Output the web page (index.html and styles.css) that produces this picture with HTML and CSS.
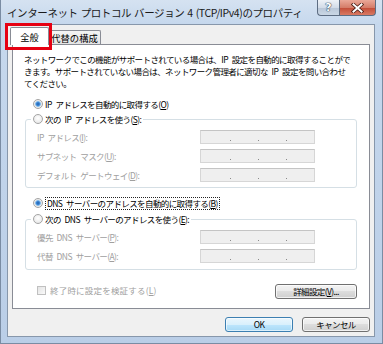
FILE: index.html
```html
<!DOCTYPE html>
<html lang="ja">
<head>
<meta charset="utf-8">
<title>インターネット プロトコル バージョン 4 (TCP/IPv4)のプロパティ</title>
<link rel="stylesheet" href="styles.css">
</head>
<body>
<div class="window">
  <div class="titlebar">
    <div class="title">インターネット プロトコル バージョン 4 (TCP/IPv4)のプロパティ</div>
    <div class="caption-btns">
      <div class="cap-btn help">?</div>
      <div class="cap-btn close">
        <svg width="13" height="10" viewBox="0 0 13 10"><path d="M2.5 1.5 L10.5 8.5 M10.5 1.5 L2.5 8.5" stroke="#4a1d14" stroke-width="3.6" stroke-linecap="square"/><path d="M2.5 1.5 L10.5 8.5 M10.5 1.5 L2.5 8.5" stroke="#ffffff" stroke-width="2" stroke-linecap="square"/></svg>
      </div>
    </div>
  </div>
  <div class="client">
    <div class="tabs">
      <div class="tab active">全般</div>
      <div class="tab second">代替の構成</div>
    </div>
    <div class="panel">
      <p class="desc">ネットワークでこの機能がサポートされている場合は、IP 設定を自動的に取得することがで<br>きます。サポートされていない場合は、ネットワーク管理者に適切な IP 設定を問い合わせ<br>てください。</p>
      <div class="opt top-opt"><span class="radio on"></span><span>IP アドレスを自動的に取得する(<u>O</u>)</span></div>
      <fieldset class="group g1">
        <legend><div class="opt"><span class="radio"></span><span>次の IP アドレスを使う(<u>S</u>):</span></div></legend>
        <div class="fields">
          <span class="lbl">IP アドレス(<u>I</u>):</span><span class="field"><i class="dot"></i><i class="dot"></i><i class="dot"></i></span>
          <span class="lbl">サブネット マスク(<u>U</u>):</span><span class="field"><i class="dot"></i><i class="dot"></i><i class="dot"></i></span>
          <span class="lbl">デフォルト ゲートウェイ(<u>D</u>):</span><span class="field"><i class="dot"></i><i class="dot"></i><i class="dot"></i></span>
        </div>
      </fieldset>
      <div class="opt mid-opt"><span class="radio on"></span><span class="focus">DNS サーバーのアドレスを自動的に取得する(<u>B</u>)</span></div>
      <fieldset class="group g2">
        <legend><div class="opt"><span class="radio"></span><span>次の DNS サーバーのアドレスを使う(<u>E</u>):</span></div></legend>
        <div class="fields">
          <span class="lbl">優先 DNS サーバー(<u>P</u>):</span><span class="field"><i class="dot"></i><i class="dot"></i><i class="dot"></i></span>
          <span class="lbl">代替 DNS サーバー(<u>A</u>):</span><span class="field"><i class="dot"></i><i class="dot"></i><i class="dot"></i></span>
        </div>
      </fieldset>
      <div class="bottom">
        <div class="check-row"><span class="check"></span><span class="lbl wide">終了時に設定を検証する(<u>L</u>)</span></div>
        <div class="btn adv">詳細設定(<u>V</u>)...</div>
      </div>
    </div>
    <div class="dlg-btns">
      <div class="btn default">OK</div>
      <div class="btn">キャンセル</div>
    </div>
  </div>
</div>
<div class="highlight"></div>
</body>
</html>
```
FILE: styles.css
```css
* { box-sizing: border-box; }
html, body { margin: 0; padding: 0; }
body {
  width: 383px;
  height: 344px;
  overflow: hidden;
  position: relative;
  font-family: "Noto Sans CJK JP", "Noto Sans", sans-serif;
  font-size: 8.5px;
  letter-spacing: -0.6px;
  word-spacing: 2.5px;
  color: #000;
}
.window {
  width: 383px;
  height: 344px;
  display: flex;
  flex-direction: column;
  padding-bottom: 7px;
  background: linear-gradient(to bottom, #d5e2f1 0, #c6d8ed 24px, #bacee7 100%);
  border: 1px solid #7a8ca3;
  border-top: none;
}
.titlebar {
  height: 24px;
  flex: none;
  display: flex;
  align-items: flex-start;
}
.title {
  flex: 1;
  padding: 6px 0 0 6px;
  font-size: 10.5px;
  letter-spacing: -0.4px;
  word-spacing: 1px;
  line-height: 14px;
  white-space: nowrap;
  color: #1a1a1a;
}
.caption-btns {
  display: flex;
  margin-right: 6px;
}
.cap-btn {
  height: 16px;
  border: 1px solid #5d6d82;
  border-top: none;
  display: flex;
  align-items: center;
  justify-content: center;
}
.help {
  width: 22px;
  border-right: none;
  border-radius: 0 0 0 4px;
  background: linear-gradient(#eef2f7 0, #d3dce8 50%, #b8c6d7 51%, #cad7e5 100%);
  color: #fff;
  font: bold 11px "DejaVu Sans", sans-serif;
  letter-spacing: 0;
  text-shadow: 0 0 1px #2f435c, 0 0 1px #2f435c, 0 0 1px #2f435c;
}
.close {
  width: 37px;
  border-radius: 0 0 4px 0;
  background: linear-gradient(#eaa898 0, #d57d69 50%, #c24b36 51%, #d97a63 100%);
}
.client {
  flex: 1;
  margin: 0 7px 0 6px;
  background: #f0f0f0;
  border: 1px solid #8797ab;
  padding: 2px 4px 4px 4px;
  display: flex;
  flex-direction: column;
}
.tabs {
  display: flex;
  align-items: flex-end;
  height: 17px;
}
.tab {
  height: 14px;
  border: 1px solid #898c95;
  border-bottom: none;
  border-radius: 2px 2px 0 0;
  background: linear-gradient(#f4f4f4, #e4e4e4);
  font-size: 9.3px;
  letter-spacing: 0;
  display: flex;
  align-items: center;
  justify-content: center;
}
.tab.active {
  width: 39px;
  height: 18px;
  margin-left: -2px;
  margin-bottom: -1px;
  background: #fff;
  position: relative;
  z-index: 1;
}
.tab.second {
  width: 53px;
  margin-left: -1px;
}
.panel {
  background: #fff;
  border: 1px solid #898c95;
  padding: 8px 12px 9px 11px;
}
.desc {
  margin: 0;
  line-height: 12px;
  white-space: nowrap;
}
.opt {
  display: flex;
  align-items: center;
  height: 14px;
  gap: 2px;
  white-space: nowrap;
}
.top-opt { margin: 8px 0 0 9px; }
.mid-opt { margin: 8px 0 0 9px; }
.radio {
  flex: none;
  width: 10px;
  height: 10px;
  border-radius: 50%;
  border: 1px solid #a4a4a4;
  background: radial-gradient(circle at 50% 40%, #ffffff 0, #e2e2e2 100%);
}
.radio.on {
  background: radial-gradient(circle at 50% 50%, #1f5ea8 0, #3d86d4 1.6px, #8cc0ec 2.6px, #e9e9e9 3.2px, #f7f7f7 100%);
}
.group {
  margin: 1px 0 0 1px;
  padding: 0 0 5px 0;
  border: 1px solid #d5dfe5;
  border-radius: 3px;
  min-width: 0;
}
.group legend {
  padding: 0 2px;
  margin-left: 5px;
}
.g1 { margin-top: 1px; }
.g2 { margin-top: 2px; padding-bottom: 6px; }
.fields {
  display: grid;
  grid-template-columns: 163px 115px;
  row-gap: 5px;
  margin: 4px 0 0 11px;
}
.lbl {
  color: #a0a0a0;
  height: 14px;
  line-height: 14px;
  white-space: nowrap;
}
.field {
  height: 14px;
  border: 1px solid #d6d6d6;
  border-top-color: #c4c4c4;
  background: #efefef;
  display: flex;
  align-items: flex-end;
  gap: 27px;
  padding: 0 0 2px 29px;
}
.dot {
  width: 1px;
  height: 1px;
  background: #8a8a8a;
}
.focus {
  border: 1px dotted #222;
  line-height: 11px;
  padding: 0 1px;
}
.bottom {
  display: flex;
  align-items: center;
  justify-content: space-between;
  margin-top: 14px;
  height: 15px;
  padding-left: 13px;
}
.check-row {
  display: flex;
  align-items: center;
  margin-bottom: 3px;
}
.check {
  width: 9px;
  height: 9px;
  border: 1px solid #c0c0c0;
  background: linear-gradient(135deg, #e4e4e4, #fafafa);
  margin-right: 4px;
}
.lbl.wide { letter-spacing: 0.2px; }
.btn {
  height: 15px;
  border: 1px solid #707070;
  border-radius: 3px;
  background: linear-gradient(#f3f3f3 0, #ebebeb 45%, #dddddd 50%, #cfcfcf 100%);
  box-shadow: inset 0 0 0 1px rgba(255, 255, 255, 0.7);
  display: flex;
  align-items: center;
  justify-content: center;
  line-height: 13px;
  white-space: nowrap;
}
.adv { width: 82px; }
.dlg-btns {
  display: flex;
  justify-content: flex-end;
  gap: 9px;
  margin-top: 8px;
}
.dlg-btns .btn { width: 68px; }
.btn.default {
  border-color: #3c7fb1;
  background: linear-gradient(#eaf6fd 0, #d9f0fc 50%, #bee6fd 50%, #a7d9f5 100%);
  box-shadow: inset 0 0 0 1px rgba(255, 255, 255, 0.6);
}
.highlight {
  position: absolute;
  left: 5px;
  top: 23px;
  width: 47px;
  height: 27px;
  border: 3px solid #e60012;
  z-index: 10;
}
```
